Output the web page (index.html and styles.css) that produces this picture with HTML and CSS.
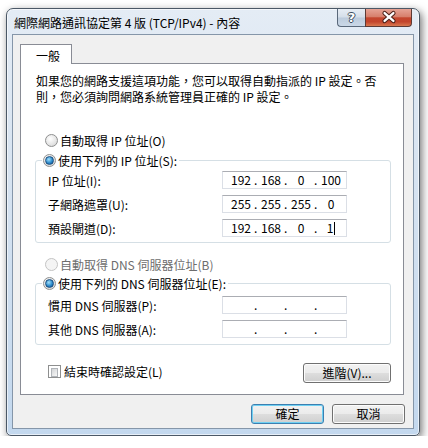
FILE: index.html
```html
<!DOCTYPE html>
<html lang="zh-Hant">
<head>
  <meta charset="utf-8">
  <title>網際網路通訊協定第 4 版 (TCP/IPv4) - 內容</title>
  <link rel="stylesheet" href="styles.css">
</head>
<body>
  <div class="window">
    <div class="titlebar">
      <span class="title">網際網路通訊協定第 4 版 (TCP/IPv4) - 內容</span>
      <div class="caption">
        <span class="caption-btn help">?</span>
        <span class="caption-btn close">
          <svg width="46" height="17" viewBox="0 0 46 17">
            <path d="M19 4 L28 12 M28 4 L19 12" stroke="#4a2018" stroke-width="4.5" stroke-linecap="round"/>
            <path d="M19 4 L28 12 M28 4 L19 12" stroke="#ffffff" stroke-width="2.4" stroke-linecap="round"/>
          </svg>
        </span>
      </div>
    </div>

    <div class="client">
      <div class="tabs">
        <div class="tab">一般</div>
      </div>

      <div class="panel">
        <p class="note">如果您的網路支援這項功能，您可以取得自動指派的 IP 設定。否<br>則，您必須詢問網路系統管理員正確的 IP 設定。</p>

        <div class="option option-first"><span class="radio"></span>自動取得 IP 位址(O)</div>
        <fieldset class="group group-ip">
          <legend><span class="option"><span class="radio checked"></span>使用下列的 IP 位址(S):</span></legend>
          <div class="fields">
            <span class="field-label">IP 位址(I):</span>
            <span class="ipbox"><span class="octet">192</span><span class="dot">.</span><span class="octet">168</span><span class="dot">.</span><span class="octet">0</span><span class="dot">.</span><span class="octet">100</span></span>
            <span class="field-label">子網路遮罩(U):</span>
            <span class="ipbox"><span class="octet">255</span><span class="dot">.</span><span class="octet">255</span><span class="dot">.</span><span class="octet">255</span><span class="dot">.</span><span class="octet">0</span></span>
            <span class="field-label">預設閘道(D):</span>
            <span class="ipbox"><span class="octet">192</span><span class="dot">.</span><span class="octet">168</span><span class="dot">.</span><span class="octet">0</span><span class="dot">.</span><span class="octet">1<span class="caret"></span></span></span>
          </div>
        </fieldset>

        <div class="option option-dns disabled"><span class="radio"></span>自動取得 DNS 伺服器位址(B)</div>
        <fieldset class="group group-dns">
          <legend><span class="option"><span class="radio checked"></span>使用下列的 DNS 伺服器位址(E):</span></legend>
          <div class="fields">
            <span class="field-label">慣用 DNS 伺服器(P):</span>
            <span class="ipbox"><span class="octet"></span><span class="dot">.</span><span class="octet"></span><span class="dot">.</span><span class="octet"></span><span class="dot">.</span><span class="octet"></span></span>
            <span class="field-label">其他 DNS 伺服器(A):</span>
            <span class="ipbox"><span class="octet"></span><span class="dot">.</span><span class="octet"></span><span class="dot">.</span><span class="octet"></span><span class="dot">.</span><span class="octet"></span></span>
          </div>
        </fieldset>

        <div class="panel-footer">
          <div class="option"><span class="checkbox"></span>結束時確認設定(L)</div>
          <button class="btn btn-wide">進階(V)...</button>
        </div>
      </div>

      <div class="dialog-buttons">
        <button class="btn btn-default">確定</button>
        <button class="btn">取消</button>
      </div>
    </div>
  </div>
</body>
</html>
```

FILE: styles.css
```css
* {
  box-sizing: border-box;
}

body {
  margin: 0;
  background-color: #FFFFFF;
  color: #000000;
  font-family: "Noto Sans CJK TC", "Noto Sans", sans-serif;
  font-size: 12px;
}

.window {
  display: flex;
  flex-direction: column;
  width: 414px;
  height: 428px;
  margin: 8px 0 0 6px;
  padding: 0 5px 6px;
  border: 1px solid #4B5866;
  border-radius: 7px 7px 5px 5px;
  background: linear-gradient(#E4ECF5, #D8E4F1 35%, #C3D8EE);
  box-shadow: 2px 3px 9px rgba(0, 0, 0, 0.55), inset 0 0 0 1px rgba(255, 255, 255, 0.6);
}

/* title bar */

.titlebar {
  display: flex;
  justify-content: space-between;
  align-items: flex-start;
  height: 25px;
}

.title {
  padding: 6px 0 0 2px;
  line-height: 16px;
}

.caption {
  display: flex;
  margin-right: 2px;
}

.caption-btn {
  display: flex;
  justify-content: center;
  align-items: center;
  height: 18px;
  border: 1px solid #59687A;
  border-top: 0;
}

.help {
  width: 28px;
  border-right: 0;
  border-radius: 0 0 0 4px;
  background: linear-gradient(#E7EDF4, #D4DEE9 48%, #BCCBDC 52%, #CAD8E7);
  color: #FFFFFF;
  font-family: "DejaVu Sans", sans-serif;
  font-size: 13px;
  font-weight: bold;
  text-shadow: 1px 0 #3D4C5C, -1px 0 #3D4C5C, 0 1px #3D4C5C, 0 -1px #3D4C5C;
}

.close {
  width: 47px;
  border-color: #5C3A35;
  border-radius: 0 0 4px 0;
  background: linear-gradient(#E6A395, #D7806C 45%, #C4462E 52%, #C3452C 75%, #D9784F);
}

/* client area */

.client {
  display: flex;
  flex: 1;
  flex-direction: column;
  border: 1px solid #8596A9;
  background-color: #F0F0F0;
}

.tabs {
  display: flex;
  margin: 9px 0 0 7px;
}

.tab {
  position: relative;
  width: 52px;
  height: 20px;
  margin-bottom: -1px;
  padding: 3px 0 0 15px;
  border: 1px solid #898C95;
  border-bottom: 0;
  background-color: #FFFFFF;
  line-height: 15px;
}

.panel {
  height: 332px;
  margin: 0 9px 0 7px;
  border: 1px solid #898C95;
  background-color: #FFFFFF;
}

.note {
  margin: 0;
  padding: 9px 0 0 15px;
  line-height: 16px;
}

.option {
  display: flex;
  align-items: center;
  gap: 2px;
  height: 15px;
  line-height: 15px;
}

.option-first {
  margin: 28px 0 0 24px;
}

.option-dns {
  margin: 14px 0 0 24px;
}

.disabled {
  color: #6D6D6D;
}

.radio {
  display: grid;
  place-items: center;
  width: 13px;
  height: 13px;
  border: 1px solid #8E8F8F;
  border-radius: 50%;
  background: radial-gradient(circle at 40% 35%, #FFFFFF, #E4E4E4 60%, #CFCFCF);
}

.radio.checked::after {
  content: "";
  width: 7px;
  height: 7px;
  border: 1px solid #1C4F80;
  border-radius: 50%;
  background: radial-gradient(circle at 40% 35%, #A4E0FB, #2D8BCB 55%, #0D4E8D);
}

.disabled .radio {
  border-color: #C4C4C4;
  background: #F4F4F4;
}

.checkbox {
  width: 13px;
  height: 13px;
  padding: 2px;
  border: 1px solid #8E8F8F;
  background-color: #FFFFFF;
}

.checkbox::after {
  content: "";
  display: block;
  height: 100%;
  border: 1px solid #B0B4B9;
  background: linear-gradient(135deg, #D2D4D6, #F8F8F8);
}

/* group boxes */

.group {
  min-width: 0;
  margin: 5px 12px 0 14px;
  padding: 3px 0 5px 12px;
  border: 1px solid #D5DFE5;
  border-radius: 3px;
}

.group-dns {
  margin-top: 4px;
  padding-top: 5px;
  padding-bottom: 6px;
}

.group legend {
  margin-left: -6px;
  padding: 0 2px 0 1px;
}

.fields {
  display: grid;
  grid-template-columns: 174px 125px;
  grid-auto-rows: 18px;
  row-gap: 6px;
  align-items: center;
}

.ipbox {
  display: flex;
  align-items: center;
  height: 18px;
  padding-left: 5px;
  border: 1px solid #DBDFE6;
  border-top-color: #ABADB3;
  background-color: #FFFFFF;
  line-height: 16px;
}

.octet {
  width: 26px;
  text-align: center;
}

.dot {
  width: 4px;
}

.caret {
  display: inline-block;
  width: 1px;
  height: 13px;
  margin-left: 1px;
  background-color: #000000;
  vertical-align: -2px;
}

.panel-footer {
  display: flex;
  justify-content: space-between;
  align-items: flex-start;
  margin: 18px 12px 0 27px;
}

.panel-footer .option {
  gap: 3px;
  height: 14px;
  margin-top: 1px;
}

/* buttons */

.btn {
  width: 73px;
  height: 20px;
  padding: 0;
  border: 1px solid #707070;
  border-radius: 3px;
  background: linear-gradient(#F2F2F2, #EBEBEB 48%, #DDDDDD 52%, #CFCFCF);
  box-shadow: inset 0 0 0 1px #FCFCFC;
  color: #000000;
  font-family: inherit;
  font-size: 12px;
  line-height: 16px;
}

.btn-wide {
  width: 88px;
}

.btn-default {
  border-color: #3C7FB1;
  box-shadow: inset 0 0 0 1px #6FD0F2;
}

.dialog-buttons {
  display: flex;
  justify-content: flex-end;
  gap: 8px;
  margin-top: 9px;
  padding-right: 8px;
}
```
